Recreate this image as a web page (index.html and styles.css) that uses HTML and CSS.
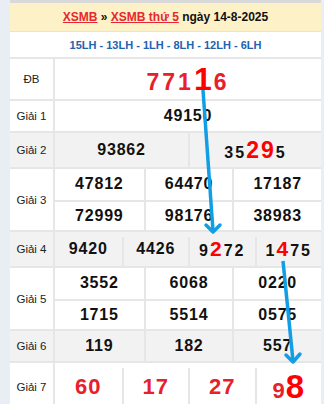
FILE: index.html
```html
<!DOCTYPE html>
<html lang="vi">
<head>
<meta charset="utf-8">
<title>XSMB thứ 5 ngày 14-8-2025</title>
<link rel="stylesheet" href="styles.css">
</head>
<body>
<div class="page">
  <div class="box">
    <div class="title"><a href="#">XSMB</a> » <a href="#">XSMB thứ 5</a> ngày 14-8-2025</div>
    <div class="codes">15LH - 13LH - 1LH - 8LH - 12LH - 6LH</div>

    <div class="row r-db">
      <div class="lbl">ĐB</div>
      <div class="vals n1">
        <div class="cell db"><span class="num">771<span class="big-db">1</span>6</span></div>
      </div>
    </div>

    <div class="row r-g1">
      <div class="lbl">Giải 1</div>
      <div class="vals n1">
        <div class="cell"><span class="num">49150</span></div>
      </div>
    </div>

    <div class="row r-g2 alt">
      <div class="lbl">Giải 2</div>
      <div class="vals n2">
        <div class="cell"><span class="num">93862</span></div>
        <div class="cell"><span class="num"><span class="wide">35</span><span class="hl hl-g2">29</span><span class="wide">5</span></span></div>
      </div>
    </div>

    <div class="row r-g3">
      <div class="lbl">Giải 3</div>
      <div class="vals n3 two">
        <div class="cell"><span class="num">47812</span></div>
        <div class="cell"><span class="num">64470</span></div>
        <div class="cell"><span class="num">17187</span></div>
        <div class="cell"><span class="num">72999</span></div>
        <div class="cell"><span class="num">98176</span></div>
        <div class="cell"><span class="num">38983</span></div>
      </div>
    </div>

    <div class="row r-g4 alt">
      <div class="lbl">Giải 4</div>
      <div class="vals n4 gap">
        <div class="cell"><span class="num">9420</span></div>
        <div class="cell"><span class="num">4426</span></div>
        <div class="cell"><span class="num"><span class="wide">9</span><span class="hl hl-g4">2</span><span class="wide">72</span></span></div>
        <div class="cell"><span class="num"><span class="wide">1</span><span class="hl hl-g4">4</span><span class="wide">75</span></span></div>
      </div>
    </div>

    <div class="row r-g5">
      <div class="lbl">Giải 5</div>
      <div class="vals n3 two">
        <div class="cell"><span class="num">3552</span></div>
        <div class="cell"><span class="num">6068</span></div>
        <div class="cell"><span class="num">0220</span></div>
        <div class="cell"><span class="num">1715</span></div>
        <div class="cell"><span class="num">5514</span></div>
        <div class="cell"><span class="num">0575</span></div>
      </div>
    </div>

    <div class="row r-g6 alt">
      <div class="lbl">Giải 6</div>
      <div class="vals n3">
        <div class="cell"><span class="num">119</span></div>
        <div class="cell"><span class="num">182</span></div>
        <div class="cell"><span class="num">557</span></div>
      </div>
    </div>

    <div class="row r-g7">
      <div class="lbl">Giải 7</div>
      <div class="vals n4 gap g7">
        <div class="cell"><span class="num">60</span></div>
        <div class="cell"><span class="num">17</span></div>
        <div class="cell"><span class="num">27</span></div>
        <div class="cell"><span class="num">9<span class="hl hl-g7">8</span></span></div>
      </div>
    </div>
  </div>

  <svg class="arrows" width="324" height="404" viewBox="0 0 324 404" aria-hidden="true">
    <g stroke="#129ee4" stroke-width="3.5" fill="none" stroke-linejoin="round">
      <path d="M203 90 L213 231"/>
      <path d="M206 225 L213 232 L220 225" stroke-linecap="round"/>
      <path d="M283 261 L293 361"/>
      <path d="M286 355 L293 362 L300 354" stroke-linecap="round"/>
    </g>
  </svg>
</div>
</body>
</html>
```

FILE: styles.css
```css
* {
  box-sizing: border-box;
}

html,
body {
  margin: 0;
  padding: 0;
}

body {
  width: 324px;
  height: 404px;
  overflow: hidden;
  background: #e9edf4;
  font-family: "Liberation Sans", Arial, sans-serif;
  color: #111;
}

.page {
  position: relative;
  height: 404px;
  padding: 0 3px 0 10px;
}

.box {
  background: #fff;
  border-top: 3px solid #d9d9d9;
}

.title {
  height: 28px;
  line-height: 28px;
  background: #fdf1c7;
  text-align: center;
  font-size: 12px;
  font-weight: bold;
  color: #111;
  white-space: nowrap;
}

.title a {
  color: #e8262d;
  text-decoration: underline;
}

.codes {
  height: 26px;
  border-top: 1px solid #e3e3e3;
  display: flex;
  align-items: center;
  justify-content: center;
  font-size: 11px;
  font-weight: bold;
  color: #1e63b0;
}

.row {
  display: grid;
  grid-template-columns: 45px 1fr;
  border-top: 2px solid #e6e6e6;
}

.alt {
  background: #f2f2f2;
}

.r-db { height: 42px; }
.r-g1 { height: 32px; }
.r-g2 { height: 36px; }
.r-g3 { height: 63px; }
.r-g4 { height: 36px; }
.r-g5 { height: 63px; }
.r-g6 { height: 32px; }
.r-g7 { height: 50px; }

.lbl {
  border-right: 2px solid #e6e6e6;
  display: flex;
  align-items: center;
  justify-content: center;
  font-size: 11.5px;
  color: #222;
}

.vals {
  display: grid;
}

.n1 { grid-template-columns: 1fr; }
.n2 { grid-template-columns: 1fr 1fr; }
.n3 { grid-template-columns: repeat(3, 1fr); }
.n4 { grid-template-columns: repeat(4, 1fr); }

.two {
  grid-template-rows: 1fr 1fr;
}

.cell {
  display: flex;
  align-items: center;
  justify-content: center;
  font-size: 16px;
  font-weight: bold;
  letter-spacing: 0.8px;
  color: #111;
}

.n2 .cell + .cell,
.n4 .cell + .cell {
  border-left: 2px solid #e6e6e6;
}

.n3 .cell:not(:nth-child(3n + 1)) {
  border-left: 2px solid #e6e6e6;
}

.two .cell:nth-child(n + 4) {
  border-top: 2px solid #e6e6e6;
}

.gap .cell {
  margin-top: 5px;
  padding-bottom: 5px;
}

.db {
  font-size: 23px;
  letter-spacing: 3px;
  color: #e8202a;
}

.big-db {
  font-size: 32px;
  color: #ff0000;
  letter-spacing: 2px;
}

.wide {
  letter-spacing: 2px;
}

.hl {
  color: #ff0000;
}

.hl-g2 {
  font-size: 23px;
  letter-spacing: 2px;
}

.hl-g4 {
  font-size: 21px;
  letter-spacing: 2px;
}

.g7 .cell {
  font-size: 22px;
  letter-spacing: 1px;
  color: #e8202a;
}

.hl-g7 {
  font-size: 33px;
  color: #ff0000;
}

.arrows {
  position: absolute;
  top: 0;
  left: 0;
  pointer-events: none;
}
```
